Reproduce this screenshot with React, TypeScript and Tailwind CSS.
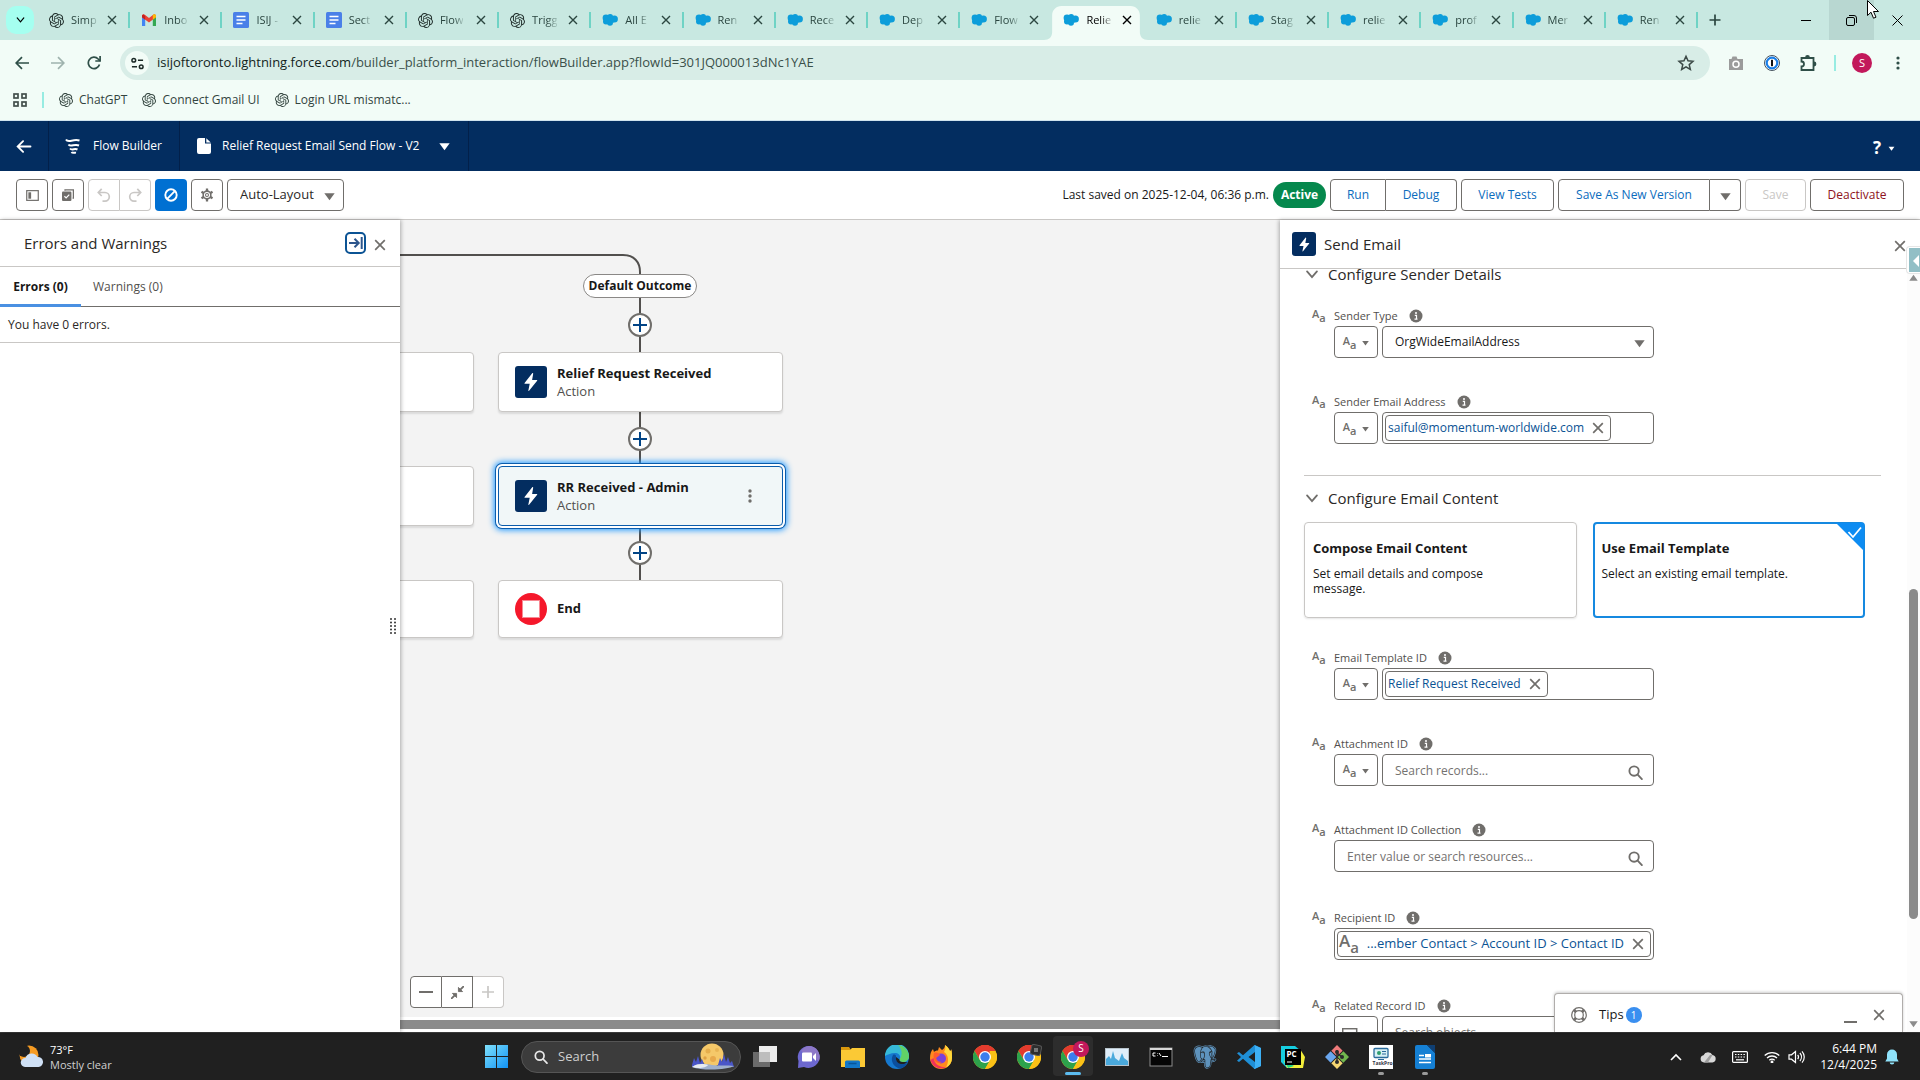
import React from "react";
import { SiOpenai } from "react-icons/si";
import { BiLogoPostgresql } from "react-icons/bi";

type P = { className?: string };

/* ---------- small drawings ---------- */

const CloudLogo = ({ className = "" }: P) => (
  <svg viewBox="0 0 16 14" className={className} fill="#0d9dda">
    <circle cx="4" cy="5" r="3.4" />
    <circle cx="8.2" cy="3.9" r="2.9" />
    <circle cx="12.4" cy="6" r="3.5" />
    <circle cx="4" cy="8.6" r="3" />
    <circle cx="8" cy="9.8" r="3" />
    <rect x="4" y="3.5" width="8" height="6" />
  </svg>
);

const GmailLogo = ({ className = "" }: P) => (
  <svg viewBox="0 0 16 14" className={className}>
    <path d="M1 13V3l3.2 2.4V13z" fill="#4285f4" />
    <path d="M11.8 13V5.4L15 3v10z" fill="#34a853" />
    <path d="M1 3a1.7 1.7 0 0 1 2.8-1.2L8 5l4.200-3.200A1.700 1.700 0 0 1 15 3v1.300L8 9.500 1 4.300z" fill="#ea4335" />
    <path d="M11.800 2.100A1.700 1.700 0 0 1 15 3v1.300l-3.200 2.400z" fill="#fbbc04" />
    <path d="M1 4.300V3c0-1 .7-1.500 1.500-1.500L4.200 3v3.700z" fill="#c5221f" />
  </svg>
);

const DocLogo = ({ className = "" }: P) => (
  <svg viewBox="0 0 16 16" className={className}>
    <rect width="16" height="16" rx="1.500" fill="#4a80e8" />
    <path d="M3.500 4.500h9M3.500 8h9M3.500 11.500h6" stroke="#fff" strokeWidth="1.700" />
  </svg>
);

const Cross = ({ className = "" }: P) => (
  <svg viewBox="0 0 10 10" className={className} stroke="currentColor" fill="none">
    <path d="M1 1l8 8M9 1l-8 8" strokeWidth="1.400" />
  </svg>
);

const Down = ({ className = "" }: P) => (
  <svg viewBox="0 0 10 8" className={className} fill="currentColor">
    <path d="M.3 1h9.400L5 7.500z" />
  </svg>
);

const Chevron = ({ className = "" }: P) => (
  <svg viewBox="0 0 14 10" className={className} fill="none" stroke="currentColor" strokeWidth="2" strokeLinecap="round">
    <path d="M1.500 1.500L7 8l5.500-6.500" />
  </svg>
);

const Bolt = ({ className = "" }: P) => (
  <svg viewBox="0 0 24 24" className={className} fill="#fff">
    <path d="M13.300 2.500L5 13.200c-.3.400 0 .8.400.8h5.200l-1.500 7.200c-.1.600.5.700.8.300L18.700 10.700c.3-.4 0-.8-.4-.8h-5.100l1.200-6.900c.1-.6-.700-1-1.100-.5z" />
  </svg>
);

const SearchIcon = ({ className = "" }: P) => (
  <svg viewBox="0 0 16 16" className={className} fill="none" stroke="currentColor" strokeWidth="2" strokeLinecap="round">
    <circle cx="6.500" cy="6.500" r="5" />
    <path d="M10.300 10.300L14.800 15" />
  </svg>
);

const Info = () => (
  <svg viewBox="0 0 14 14" className="size-[14px]">
    <circle cx="7" cy="7" r="6.500" fill="#706e6b" />
    <circle cx="7" cy="4" r="1" fill="#fff" />
    <path d="M5.800 6.300h1.700v3.700M5.500 10.200h3" stroke="#fff" strokeWidth="1.200" fill="none" />
  </svg>
);

/* the "text" data type mark */
const Aa = ({ big = false }: { big?: boolean }) => (
  <span aria-hidden className={big ? "flex text-[#706e6b] text-[17px] font-semibold leading-4" : "flex text-[#706e6b] text-[11px] font-semibold leading-3"}>
    A<span className={big ? "text-[15px] pt-1.5 leading-4" : "text-[11px] pt-1 leading-3"}>a</span>
  </span>
);

/* ---------- browser ---------- */

const tabs: [string, string][] = [
  ["ai", "Simp"], ["gmail", "Inbo"], ["doc", "ISIJ -"], ["doc", "Sect"], ["ai", "Flow"], ["ai", "Trigg"],
  ["sf", "All E"], ["sf", "Ren"], ["sf", "Rece"], ["sf", "Dep"], ["sf", "Flow"], ["sf", "Relie"],
  ["sf", "relie"], ["sf", "Stag"], ["sf", "relie"], ["sf", "prof"], ["sf", "Mer"], ["sf", "Ren"],
];

const TabIcon = ({ kind }: { kind: string }) =>
  kind === "ai" ? <SiOpenai className="size-[15px] shrink-0 text-[#22302d]" />
  : kind === "gmail" ? <GmailLogo className="h-[14px] w-4 shrink-0" />
  : kind === "doc" ? <DocLogo className="size-4 shrink-0" />
  : <CloudLogo className="h-[14px] w-4 shrink-0" />;

function TabStrip() {
  return (
    <div className="flex h-10 shrink-0 bg-[#c8e8e1] text-[#2b4640]">
      <div className="w-[38px] shrink-0 p-1.5">
        <button aria-label="Search tabs" className="flex size-7 items-center justify-center rounded-[10px] bg-[#a5fff0]">
          <Chevron className="h-[6px] w-[9px] text-black" />
        </button>
      </div>
      <div className="flex min-w-0 flex-1">
        {tabs.map(([kind, label], i) => {
          const active = i === 11;
          return (
            <div key={i} className={`relative flex min-w-0 flex-1 ${active ? "text-black" : ""}`}>
              {active && (
                <svg viewBox="0 0 102 34" className="absolute -left-2 top-1.5 h-[34px] w-[104px]" preserveAspectRatio="none" fill="#f2fcf7">
                  <path d="M0 34c5 0 8-3 8-8V9c0-5 4-9 9-9h68c5 0 9 4 9 9v17c0 5 3 8 8 8z" />
                </svg>
              )}
              <button className="relative flex min-w-0 flex-1 items-center pl-[11px]">
                <TabIcon kind={kind} />
                <span className="ml-[7px] whitespace-nowrap text-left text-[11px] [mask-image:linear-gradient(to_right,black_60%,#0003)]">{label}</span>
              </button>
              <button aria-label={`Close ${label}`} className="relative flex w-[21px] items-center"><Cross className="size-[10px]" /></button>
              <span className={`mt-3 h-4 w-0.5 ${active || i === 10 ? "" : "bg-[#6fd3c5]"}`} />
            </div>
          );
        })}
      </div>
      <div className="flex w-[222px] shrink-0 items-stretch">
        <button aria-label="New tab" className="flex w-[34px] items-center justify-center">
          <svg viewBox="0 0 12 12" className="size-3" stroke="currentColor" strokeWidth="1.700"><path d="M6 .5v11M.5 6h11" /></svg>
        </button>
        <div className="w-[51px]" />
        <button aria-label="Minimize" className="flex w-[46px] items-center justify-center"><span className="h-px w-2.5 bg-black" /></button>
        <button aria-label="Restore" className="flex w-[45px] items-center justify-center bg-[#b8d7d1]">
          <svg viewBox="0 0 11 11" className="size-[11px]" fill="none" stroke="#000"><rect x=".5" y="2.500" width="8" height="8" rx="1.500" /><path d="M3 .5h5a2.500 2.500 0 0 1 2.500 2.500v5" /></svg>
        </button>
        <button aria-label="Close" className="flex w-[46px] items-center justify-center text-black">
          <svg viewBox="0 0 11 11" className="size-[11px]" stroke="currentColor"><path d="M.5.5l10 10M10.500.5l-10 10" /></svg>
        </button>
      </div>
    </div>
  );
}

function AddressRow() {
  const ib = "flex w-9 items-center justify-center";
  return (
    <div className="flex h-[46px] shrink-0 items-center bg-[#f2fcf7] pl-1 text-[#2f4f48]">
      <button aria-label="Back" className={ib}>
        <svg viewBox="0 0 14 14" className="size-[14px]" fill="none" stroke="currentColor" strokeWidth="1.700"><path d="M14 7H1.500M7 1.200L1.200 7 7 12.800" /></svg>
      </button>
      <button aria-label="Forward" className="flex w-9 items-center justify-center text-[#9fb3ae]">
        <svg viewBox="0 0 14 14" className="size-[14px]" fill="none" stroke="currentColor" strokeWidth="1.700"><path d="M0 7h12.500M7 1.200L12.800 7 7 12.800" /></svg>
      </button>
      <button aria-label="Reload" className={ib}>
        <svg viewBox="0 0 14 14" className="size-[14px]" fill="none" stroke="currentColor" strokeWidth="1.700"><path d="M12.500 8.500A5.700 5.700 0 1 1 11.200 3L13 4.800" /><path d="M13.100 0v5H8.300" /></svg>
      </button>
      <div className="ml-2 flex h-[34px] flex-1 items-center rounded-full bg-[#d8ede7] pl-[5px] pr-[15px]">
        <button aria-label="Site information" className="flex size-6 shrink-0 items-center justify-center rounded-full bg-[#f2fcf7]">
          <svg viewBox="0 0 14 14" className="size-[13px]" fill="none" stroke="#1c2b28" strokeWidth="1.600"><circle cx="3" cy="3.500" r="2" /><path d="M7.500 3.500H13M1 10.500h5.500" /><circle cx="11" cy="10.500" r="2" /></svg>
        </button>
        <div className="ml-2 flex-1 whitespace-nowrap text-[13px] text-[#3a504a]" role="textbox" aria-label="Address">
          <span className="text-[#121f1c]">isijoftoronto.lightning.force.com</span>/builder_platform_interaction/flowBuilder.app?flowId=301JQ000013dNc1YAE
        </div>
        <button aria-label="Bookmark this page">
          <svg viewBox="0 0 24 24" className="size-[18px]" fill="none" stroke="#3c4a47" strokeWidth="2"><path d="M12 3l2.700 6.100 6.600.6-5 4.400 1.500 6.500L12 17.200l-5.800 3.400 1.500-6.500-5-4.400 6.600-.6z" /></svg>
        </button>
      </div>
      <div className="flex w-[210px] shrink-0 items-center pl-2">
        <button aria-label="Screenshot" className={ib}>
          <svg viewBox="0 0 16 16" className="size-4"><path d="M1 4h2.500l1-2.500h4L9.500 4H15v11H1z" fill="#9b9b9b" /><circle cx="8" cy="9.300" r="3" fill="none" stroke="#fff" strokeWidth="1.500" /></svg>
        </button>
        <button aria-label="Password manager" className={ib}>
          <svg viewBox="0 0 16 16" className="size-4"><circle cx="8" cy="8" r="7.500" fill="#fff" stroke="#44515c" /><circle cx="8" cy="8" r="5.300" fill="#fff" stroke="#1a7fe8" strokeWidth="2.200" /><rect x="7" y="4.800" width="2" height="6.400" fill="#111" /></svg>
        </button>
        <button aria-label="Extensions" className={ib}>
          <svg viewBox="0 0 18 18" className="size-[18px]" fill="none" stroke="currentColor" strokeWidth="1.800"><path d="M2.500 4h12v12h-12v-3.500a2.300 2.300 0 0 0 0-5z" /><path d="M7 3.500a1.500 1.500 0 0 1 3 0zM15 8.500a1.500 1.500 0 0 1 0 3z" fill="currentColor" /></svg>
        </button>
        <span className="ml-2 h-4 w-0.5 bg-[#97ece2]" />
        <button aria-label="Profile" className="ml-4 flex size-5 items-center justify-center rounded-full bg-[#c2185b] text-[11px] text-white">S</button>
        <button aria-label="Browser menu" className="ml-2 flex w-9 items-center justify-center">
          <svg viewBox="0 0 4 14" className="h-[14px] w-1" fill="currentColor"><circle cx="2" cy="2" r="1.600" /><circle cx="2" cy="7" r="1.600" /><circle cx="2" cy="12" r="1.600" /></svg>
        </button>
      </div>
    </div>
  );
}

function Bookmarks() {
  return (
    <nav className="flex h-[35px] shrink-0 items-center border-b border-[#cfe3ee] bg-[#f2fcf7] pb-[7px] pl-[13px] text-xs text-[#33443f]">
      <button aria-label="Apps"><svg viewBox="0 0 14 14" className="size-[14px]" fill="none" stroke="#444f4c" strokeWidth="1.700"><rect x="1" y="1" width="4" height="4" /><rect x="9" y="1" width="4" height="4" /><rect x="1" y="9" width="4" height="4" /><rect x="9" y="9" width="4" height="4" /></svg></button>
      <span className="ml-[15px] mr-[15px] h-4 w-0.5 bg-[#97ece2]" />
      {["ChatGPT", "Connect Gmail UI", "Login URL mismatc..."].map((t) => (
        <a key={t} href="#bookmark" className="mr-[15px] flex items-center gap-1.5 whitespace-nowrap"><SiOpenai className="size-[14px]" />{t}</a>
      ))}
    </nav>
  );
}

/* ---------- flow builder ---------- */

function AppHeader() {
  return (
    <header className="flex h-[50px] shrink-0 items-stretch bg-[#032d60] text-xs text-white">
      <button aria-label="Back" className="flex w-[49px] items-center justify-center border-r border-[#02204a]">
        <svg viewBox="0 0 16 14" className="h-[13px] w-4" fill="none" stroke="#fff" strokeWidth="2" strokeLinecap="round"><path d="M15 7H1.500M7 1.200L1.200 7 7 12.800" /></svg>
      </button>
      <div className="flex w-[131px] items-center gap-3 border-r border-[#02204a] pl-4">
        <svg viewBox="0 0 16 16" className="size-4" fill="none" stroke="#fff" strokeWidth="2"><path d="M1 1.500C3 5.500 8 .5 14.500 2.500M3.500 6.500c2 3 6-1 10.500 1M5 10.500c2 2.500 4.500-.5 7.500 1M6.500 14c1 1.500 2.500.3 4.500.8" /></svg>
        <span className="whitespace-nowrap">Flow Builder</span>
      </div>
      <button className="flex w-[289px] items-center border-r border-[#02204a] pl-[17px]">
        <svg viewBox="0 0 14 16" className="h-4 w-[14px]" fill="#fff"><path d="M2 0h6v5.500h6V14a2 2 0 0 1-2 2H2a2 2 0 0 1-2-2V2a2 2 0 0 1 2-2z" /><path d="M9.300.2L13.800 4.500H9.300z" /></svg>
        <span className="ml-[11px] whitespace-nowrap">Relief Request Email Send Flow - V2</span>
        <Down className="ml-auto mr-[18px] h-[9px] w-[11px]" />
      </button>
      <button className="ml-auto mr-[25px] flex items-center gap-[7px] pt-1 text-[17px] font-bold">?<Down className="h-[5px] w-[7px]" /></button>
    </header>
  );
}

const tb = "flex h-8 items-center justify-center border border-[#706e6b] bg-white text-[#706e6b]";
const act = "flex h-8 items-center justify-center border border-[#706e6b] bg-white text-[#0b6cbd]";

function Toolbar() {
  return (
    <div className="flex h-[49px] shrink-0 items-center gap-1 border-b border-[#c9c7c5] bg-white px-4 text-xs">
      <button aria-label="Toggle toolbox" className={tb + " w-8 rounded"}>
        <svg viewBox="0 0 14 12" className="h-[11px] w-[13px]" fill="none" stroke="currentColor" strokeWidth="1.300"><rect x=".7" y=".7" width="12.600" height="10.600" /><rect x="2.500" y="2.500" width="3" height="7" fill="currentColor" stroke="none" /></svg>
      </button>
      <button aria-label="Select elements" className={tb + " w-8 rounded"}>
        <svg viewBox="0 0 14 14" className="size-3"><path d="M3.500 2V1h9.800v9.700h-1" fill="none" stroke="currentColor" strokeWidth="1.500" /><rect x="0" y="3" width="11" height="11" rx="1.300" fill="currentColor" /><path d="M2.800 8.500l2 2 3.700-4" fill="none" stroke="#fff" strokeWidth="1.400" /></svg>
      </button>
      <div className="flex text-[#c9c7c5]">
        <button aria-label="Undo" disabled className="flex h-8 w-8 items-center justify-center rounded-l border border-[#c9c7c5]">
          <svg viewBox="0 0 14 14" className="size-[14px]" fill="none" stroke="currentColor" strokeWidth="1.700"><path d="M4.700.8L1.300 4.500l3.400 3.500M1.500 4.500H8a4.300 4.300 0 0 1 0 8.600H5.500" /></svg>
        </button>
        <button aria-label="Redo" disabled className="flex h-8 w-[31px] items-center justify-center rounded-r border border-l-0 border-[#c9c7c5]">
          <svg viewBox="0 0 14 14" className="size-[14px]" fill="none" stroke="currentColor" strokeWidth="1.700"><path d="M9.300.8l3.400 3.700L9.300 8M12.500 4.500H6a4.300 4.300 0 0 0 0 8.600h2.500" /></svg>
        </button>
      </div>
      <button aria-label="Show errors" className="flex size-8 items-center justify-center rounded bg-[#0070d2] text-white">
        <svg viewBox="0 0 14 14" className="size-[14px]" fill="none" stroke="currentColor" strokeWidth="1.900"><circle cx="7" cy="7" r="5.700" /><path d="M3.200 10.800l7.600-7.600" /></svg>
      </button>
      <button aria-label="Settings" className={tb + " w-8 rounded"}>
        <svg viewBox="0 0 16 16" className="size-[14px]" fill="none" stroke="currentColor"><circle cx="8" cy="8" r="4.400" strokeWidth="1.800" /><circle cx="8" cy="8" r="1.700" strokeWidth="1.200" /><path d="M8 .7v2.800M8 12.500v2.800M1.700 4.300l2.400 1.400M11.900 10.300l2.400 1.400M1.700 11.700l2.400-1.400M11.900 5.700l2.400-1.400" strokeWidth="2.600" /></svg>
      </button>
      <div className="relative">
        <select aria-label="Layout mode" className="h-8 w-[117px] appearance-none rounded border border-[#706e6b] bg-white pl-3 text-[13px] text-[#2b2826]"><option>Auto-Layout</option></select>
        <Down className="pointer-events-none absolute right-[9px] top-[13px] h-[9px] w-[11px] text-[#706e6b]" />
      </div>
      <span className="ml-auto whitespace-nowrap text-[#181818]">Last saved on 2025-12-04, 06:36 p.m.</span>
      <span className="flex h-[26px] w-[53px] items-center justify-center rounded-full bg-[#05884d] font-bold text-white">Active</span>
      <div className="flex">
        <button className={act + " w-14 rounded-l"}>Run</button>
        <button className={act + " w-[71px] rounded-r border-l-0"}>Debug</button>
      </div>
      <button className={act + " w-[93px] rounded"}>View Tests</button>
      <div className="flex">
        <button className={act + " w-[152px] rounded-l"}>Save As New Version</button>
        <button aria-label="More save options" className={tb + " w-[31px] rounded-r border-l-0"}><Down className="mt-0.5 h-[9px] w-[11px]" /></button>
      </div>
      <button disabled className="h-8 w-[61px] rounded border border-[#c9c7c5] text-[#c9c7c5]">Save</button>
      <button className="h-8 w-[94px] rounded border border-[#706e6b] text-[#8e1320]">Deactivate</button>
    </div>
  );
}

function ErrorsPanel() {
  return (
    <aside className="relative z-10 flex w-[400px] shrink-0 flex-col bg-white shadow-[1px_0_4px_rgba(0,0,0,0.3)]">
      <div className="flex h-[47px] items-center border-b border-[#c9c7c5] pl-6 pr-[14px]">
        <h2 className="text-[15px] text-[#2b2826]">Errors and Warnings</h2>
        <button aria-label="Dock panel" className="ml-auto flex h-[22px] w-[21px] items-center justify-center rounded-[5px] border-2 border-[#0b5394] text-[#2d568c]">
          <svg viewBox="0 0 14 12" className="h-3 w-[14px] shrink-0" fill="none" stroke="currentColor" strokeWidth="2"><path d="M0 6h9M5.500 1.800L9.700 6l-4.200 4.200M12.700 0v12" /></svg>
        </button>
        <button aria-label="Close panel" className="ml-2 mt-1 text-[#706e6b]"><Cross className="size-3" /></button>
      </div>
      <div role="tablist" className="flex h-10 border-b border-[#706e6b] text-xs">
        <button role="tab" className="-mb-px w-[81px] border-b-[3px] border-[#4a90e2] pt-0.5 font-bold text-[#181818]">Errors (0)</button>
        <button role="tab" className="px-3 text-[#514f4d]">Warnings (0)</button>
      </div>
      <p className="flex h-9 items-center border-b border-[#c9c7c5] pl-2 pt-px text-xs text-[#2b2826]">You have 0 errors.</p>
      <svg viewBox="0 0 6 16" className="absolute right-1 top-[398px] h-4 w-[6px]" fill="#333">
        {[1, 4.500, 8, 11.500, 15].map((y) => <g key={y}><circle cx="1" cy={y} r="1" /><circle cx="5" cy={y} r="1" /></g>)}
      </svg>
    </aside>
  );
}

const AddDot = ({ className = "" }: P) => (
  <button aria-label="Add element" className={"absolute left-[228px] flex size-6 items-center justify-center rounded-full border-2 border-[#706e6b] bg-white " + className}>
    <svg viewBox="0 0 14 14" className="size-[14px] shrink-0" stroke="#014486" strokeWidth="2"><path d="M7 0v14M0 7h14" /></svg>
  </button>
);

const nodeBox = "absolute left-[98px] flex w-[285px] items-center rounded border pl-4 text-left";
const ghost = "absolute -left-[211px] w-[285px] rounded border border-[#c9c7c5] bg-white shadow-[0_2px_2px_rgba(0,0,0,0.1)]";

function ActionBody({ title }: { title: string }) {
  return (
    <>
      <span className="flex size-8 shrink-0 items-center justify-center rounded-[3px] bg-[#032d60]"><Bolt className="size-[22px]" /></span>
      <span className="ml-[10px] flex flex-col">
        <span className="text-[13px] font-bold leading-[18px] text-[#181818]">{title}</span>
        <span className="text-[13px] leading-[18px] text-[#514f4d]">Action</span>
      </span>
    </>
  );
}

function Canvas() {
  return (
    <main className="flex min-w-0 flex-1 flex-col bg-white">
      <div className="relative flex-1 overflow-hidden bg-[#f3f3f3]">
        <svg className="absolute left-0 top-0 h-[400px] w-[300px]" fill="none" stroke="#514f4d" strokeWidth="2"><path d="M0 35h223c11 0 17 7 17 17v308" /></svg>
        <span className="absolute left-[183px] top-[54px] flex h-6 w-[114px] items-center justify-center whitespace-nowrap rounded-full border border-[#8a8886] bg-white text-xs font-bold text-[#181818]">Default Outcome</span>
        <AddDot className="top-[93px]" />
        <AddDot className="top-[207px]" />
        <AddDot className="top-[321px]" />
        <div className={ghost + " top-[132px] h-[60px]"} />
        <div className={ghost + " top-[246px] h-[60px]"} />
        <div className={ghost + " top-[360px] h-[58px]"} />
        <button className={nodeBox + " top-[132px] h-[60px] border-[#c9c7c5] bg-white shadow-[0_2px_2px_rgba(0,0,0,0.1)]"}><ActionBody title="Relief Request Received" /></button>
        <div className={nodeBox + " top-[246px] h-[60px] border-[#0b5cab] bg-[#f1f7f8] shadow-[0_0_0_2px_#fff,0_0_0_3px_#0b5cab,0_0_6px_4px_#1b96ff]"}>
          <ActionBody title="RR Received - Admin" />
          <button aria-label="Element menu" className="ml-auto mr-[30px]">
            <svg viewBox="0 0 4 14" className="h-[14px] w-1" fill="#706e6b"><circle cx="2" cy="2" r="1.700" /><circle cx="2" cy="7" r="1.700" /><circle cx="2" cy="12" r="1.700" /></svg>
          </button>
        </div>
        <button className={nodeBox + " top-[360px] h-[58px] border-[#c9c7c5] bg-white shadow-[0_2px_2px_rgba(0,0,0,0.1)]"}>
          <svg viewBox="0 0 32 32" className="size-8"><circle cx="16" cy="16" r="16" fill="#f5182b" /><rect x="7.500" y="7.500" width="17" height="17" fill="#fff" stroke="#f78a94" /></svg>
          <span className="ml-[10px] text-[13px] font-bold text-[#181818]">End</span>
        </button>
        <div className="absolute bottom-[9px] left-[10px] flex">
          <button aria-label="Zoom out" className={tb + " w-8 rounded-l"}><span className="h-0.5 w-[14px] bg-[#706e6b]" /></button>
          <button aria-label="Zoom to fit" className={tb + " w-[31px] border-l-0"}>
            <svg viewBox="0 0 14 14" className="size-[13px]" fill="currentColor" stroke="currentColor"><path d="M14 0L9.500 4.500M0 14l4.500-4.500" strokeWidth="2" /><path d="M8 1.500V6h4.500zM6 12.500V8H1.500z" /></svg>
          </button>
          <button aria-label="Zoom in" disabled className="flex h-8 w-[31px] items-center justify-center rounded-r border border-l-0 border-[#c9c7c5] bg-white">
            <svg viewBox="0 0 12 12" className="size-3" stroke="#c9c7c5" strokeWidth="1.700"><path d="M6 0v12M0 6h12" /></svg>
          </button>
        </div>
      </div>
      <div className="h-[15px] shrink-0 py-[3px]"><div className="h-[9px] bg-[#8b8b8b]" /></div>
    </main>
  );
}

function Label({ id, text }: { id: string; text: string }) {
  return (
    <div className="flex h-5 items-center pl-2">
      <span className="w-[22px]"><Aa /></span>
      <label htmlFor={id} className="mr-[11px] whitespace-nowrap text-[11px] text-[#514f4d]">{text}</label>
      <Info />
    </div>
  );
}

const TypeButton = () => (
  <button aria-label="Data type" className={tb + " w-11 shrink-0 gap-1.5 rounded pt-0.5"}>
    <Aa /><Down className="h-[6px] w-[7px]" />
  </button>
);

const fieldBox = "relative flex h-8 flex-1 items-center rounded border border-[#706e6b] bg-white";

function Chip({ text, big = false, id }: { text: string; big?: boolean; id: string }) {
  return (
    <div className={fieldBox + " px-0.5"}>
      <span className={"flex h-[26px] items-center whitespace-nowrap rounded border border-[#706e6b] text-[#0b5394] " + (big ? "w-full pl-px pr-1 text-[13px]" : "pl-0.5 pr-1 text-xs")}>
        {big && <Aa big />}
        <span className={big ? "ml-auto" : ""}>{text}</span>
        <button aria-label={`Remove ${text}`} className="ml-2 mr-0.5 text-[#706e6b]"><Cross className="size-3" /></button>
      </span>
      {!big && <input id={id} className="w-4 min-w-0 flex-1 outline-none" />}
      {big && <input id={id} type="hidden" />}
    </div>
  );
}

function SearchField({ id, placeholder }: { id: string; placeholder: string }) {
  return (
    <div className={fieldBox}>
      <input id={id} placeholder={placeholder} className="h-full w-full rounded bg-transparent pl-3 text-xs outline-none placeholder:text-[#747270]" />
      <SearchIcon className="absolute right-[10px] top-[10px] size-[15px] text-[#706e6b]" />
    </div>
  );
}

const fieldRow = "ml-[30px] flex w-[320px] gap-1";

function SendEmailPanel() {
  return (
    <aside className="relative z-10 flex w-[640px] shrink-0 flex-col bg-white shadow-[-1px_0_4px_rgba(0,0,0,0.3)]">
      <div className="flex h-[49px] shrink-0 items-center border-b border-[#c9c7c5] pl-3 pr-[14px]">
        <span className="flex size-6 items-center justify-center rounded-[3px] bg-[#032d60]"><Bolt className="size-[17px]" /></span>
        <h2 className="ml-2 text-[15px] text-[#2b2826]">Send Email</h2>
        <button aria-label="Close panel" className="ml-auto mt-1 text-[#706e6b]"><Cross className="size-3" /></button>
      </div>
      <div className="flex min-h-0 flex-1">
        <div className="min-w-0 flex-1 overflow-hidden pl-6">
          <button className="-mt-[7px] flex h-6 items-center gap-[9px] pl-px text-[15px] text-[#2b2826]"><Chevron className="h-[9px] w-[14px] text-[#706e6b]" />Configure Sender Details</button>
          <div className="mt-5"><Label id="st" text="Sender Type" />
            <div className={fieldRow}><TypeButton />
              <div className="relative flex-1">
                <select id="st" className="h-8 w-full appearance-none rounded border border-[#706e6b] bg-white pl-3 text-xs text-[#181818]"><option>OrgWideEmailAddress</option></select>
                <Down className="pointer-events-none absolute right-[9px] top-[13px] h-[9px] w-[11px] text-[#706e6b]" />
              </div>
            </div>
          </div>
          <div className="mt-[34px]"><Label id="se" text="Sender Email Address" />
            <div className={fieldRow}><TypeButton /><Chip id="se" text="saiful@momentum-worldwide.com" /></div>
          </div>
          <hr className="mr-[26px] mt-[31px] border-[#c9c7c5]" />
          <button className="mt-[10px] flex h-6 items-center gap-[9px] pl-px text-[15px] text-[#2b2826]"><Chevron className="h-[9px] w-[14px] text-[#706e6b]" />Configure Email Content</button>
          <div className="mr-[42px] mt-3 grid grid-cols-2 gap-4 text-[#181818]">
            <button className="flex h-24 flex-col rounded border border-[#c9c7c5] px-2 pt-4 text-left shadow-[0_1px_2px_rgba(0,0,0,0.1)]">
              <b className="text-[13px] leading-[18px]">Compose Email Content</b>
              <span className="mt-[9px] w-[200px] text-xs leading-[15px]">Set email details and compose message.</span>
            </button>
            <button className="relative flex h-24 flex-col rounded border-2 border-[#1589e0] px-[7px] pt-[15px] text-left">
              <b className="text-[13px] leading-[18px]">Use Email Template</b>
              <span className="mt-[9px] text-xs leading-[15px]">Select an existing email template.</span>
              <svg viewBox="0 0 28 28" className="absolute -right-px -top-px size-7"><path d="M0 0h28v28z" fill="#0d8cf2" /><path d="M12.500 9l4.500 5L25 4.500" fill="none" stroke="#fff" strokeWidth="1.800" /></svg>
            </button>
          </div>
          <div className="mt-[30px]"><Label id="et" text="Email Template ID" />
            <div className={fieldRow}><TypeButton /><Chip id="et" text="Relief Request Received" /></div>
          </div>
          <div className="mt-[34px]"><Label id="ai" text="Attachment ID" />
            <div className={fieldRow}><TypeButton /><SearchField id="ai" placeholder="Search records..." /></div>
          </div>
          <div className="mt-[34px]"><Label id="ac" text="Attachment ID Collection" />
            <div className={fieldRow}><SearchField id="ac" placeholder="Enter value or search resources..." /></div>
          </div>
          <div className="mt-9"><Label id="ri" text="Recipient ID" />
            <div className={fieldRow}><Chip id="ri" big text="...ember Contact > Account ID > Contact ID" /></div>
          </div>
          <div className="mt-9"><Label id="rr" text="Related Record ID" />
            <div className={fieldRow}>
              <button aria-label="Object type" className={tb + " w-11 shrink-0 rounded"}>
                <svg viewBox="0 0 16 12" className="-ml-3 mt-1 h-3 w-4" fill="none" stroke="currentColor" strokeWidth="1.500"><rect x=".7" y=".7" width="14" height="10" /></svg>
              </button>
              <SearchField id="rr" placeholder="Search objects..." />
            </div>
          </div>
        </div>
        <div className="flex w-[13px] shrink-0 flex-col items-center bg-[#fcfcfc] pb-1 pr-px pt-[5px]">
          <Down className="h-2 w-[9px] rotate-180 text-[#8b8b8b]" />
          <div className="mt-[307px] h-[330px] w-[9px] rounded-full bg-[#8b8b8b]" />
          <Down className="mt-auto h-2 w-[9px] text-[#8b8b8b]" />
        </div>
      </div>
      <button aria-label="Open side widget" className="absolute right-0 top-[26px] flex h-[28px] w-[14px] items-center justify-end rounded-l border border-r-0 border-[#e6e6e6] bg-white pl-0.5">
        <svg viewBox="0 0 11 24" className="h-6 w-[11px]"><rect width="11" height="24" fill="#92bfc6" /><path d="M10 7v12L4 13z" fill="#fff" /></svg>
      </button>
      <div className="absolute bottom-0 right-[17px] flex h-[39px] w-[349px] items-center rounded-t border border-b-0 border-[#b0adab] bg-white pl-4 pr-[17px] pt-1 text-[13px] text-[#181818] shadow-[0_-1px_3px_rgba(0,0,0,0.2)]">
        <svg viewBox="0 0 16 16" className="size-4" fill="none" stroke="#706e6b"><circle cx="8" cy="8" r="7.300" strokeWidth="1.200" /><circle cx="8" cy="8" r="4.300" strokeWidth="1.200" /><g strokeWidth="3"><path d="M2.800 2.800L5 5M13.200 2.800L11 5M2.800 13.200L5 11M13.200 13.200L11 11" /></g></svg>
        <span className="ml-3">Tips</span>
        <span className="ml-0.5 flex size-4 items-center justify-center rounded-full bg-[#3a8ff0] text-[10px] text-white">1</span>
        <button aria-label="Minimize tips" className="ml-auto flex h-4 items-end"><span className="h-0.5 w-[13px] bg-[#706e6b]" /></button>
        <button aria-label="Close tips" className="ml-4 text-[#706e6b]"><Cross className="size-3" /></button>
      </div>
    </aside>
  );
}

/* ---------- taskbar ---------- */

const ChromeLogo = () => (
  <svg viewBox="0 0 24 24" className="size-6">
    <circle cx="12" cy="12" r="12" fill="#fbc116" />
    <path d="M12 12L1.600 6A12 12 0 0 1 22.400 6z" fill="#e33b2e" />
    <path d="M12 6h10.400A12 12 0 0 0 1.600 6L6.800 15z" fill="#e33b2e" />
    <path d="M1.600 6A12 12 0 0 0 12 24l5.200-9L12 12 6.800 15z" fill="#2da24c" />
    <path d="M12 24l5.200-9A6 6 0 0 0 17.200 9L16.500 6h5.900A12 12 0 0 1 12 24z" fill="#fbc116" />
    <circle cx="12" cy="12" r="6" fill="#fff" /><circle cx="12" cy="12" r="4.700" fill="#3b7ded" />
  </svg>
);

const S = ({ children }: { children: React.ReactNode }) => <svg viewBox="0 0 24 24" className="size-6">{children}</svg>;

const apps: [string, React.ReactNode][] = [
  ["Task view", <S key="a"><rect y="7" width="17" height="15" fill="#6b6b6b" /><rect x="6" y="1" width="18" height="16" fill="#ededed" /><rect x="6" y="7" width="11" height="10" fill="#bdbdbd" /></S>],
  ["Chat", <S key="b"><path d="M12 1a11 11 0 1 1-5 21l-6 1 .5-7A11 11 0 0 1 12 1z" fill="#6d68d0" /><path d="M12 1a11 11 0 0 1 10 15L4 6a11 11 0 0 1 8-5z" fill="#8d78c8" /><rect x="5" y="7.500" width="10" height="9" rx="1" fill="#fff" /><path d="M16 11l3-3v8l-3-3z" fill="#fff" /></S>],
  ["Files", <S key="c"><path d="M0 2h8l2 3H0z" fill="#d9980d" /><path d="M0 5h9l2-2h13v19H0z" fill="#fbc935" /><path d="M4 23v-6a1.500 1.500 0 0 1 1.500-1.500h12A1.500 1.500 0 0 1 19 17v6z" fill="#1277c8" /><path d="M7.500 18.500h8" stroke="#07559a" strokeWidth="1.500" /></S>],
  ["Edge", <S key="d"><circle cx="12" cy="12" r="12" fill="#1679cf" /><path d="M0 11A12 12 0 0 1 24 11c0 4-3 6-6.500 6-2 0-3.500-1-3-2.500 2-3-.5-6.500-4.500-6.500-4.500 0-8 2-10 3z" fill="#36b9d8" /><path d="M13 .1A12 12 0 0 1 24 11c0 4-3 6-6.500 6-2 0-3.500-1-3-2.500C18 10 17 4 13 .1z" fill="#62d266" /><path d="M8 10c-3 5 0 12 7 13.500 4-.5 6-3 8-5.500-7 3-13-.5-12-6 .5-2-1.500-3-3-2z" fill="#0b4e9c" /><path d="M11 12c-.5 4 1.500 6.500 5 7 3 .4 5-.5 6.500-1.500-1.500-.5-3-.5-5-.5-2 0-3.500-1-3-2.500z" fill="#202020" /></S>],
  ["Firefox", <S key="e"><path d="M1 13c0-4 1-7 3-9l1 3c1-1 2-1.500 4-1.500L10 2l3 3c2-1 3-3 3-5 3 2 4 4 5 6 1 0 1-1 1-2 1 3 1 5 1 9a11 11 0 0 1-22 0z" fill="#ff8a1e" /><path d="M16 0c3 2 4 4 5 6 1 0 1-1 1-2 1 3 1 5 1 9a11 11 0 0 1-6 9.500C20 17 20 10 15 7c1-2 2-4 1-7z" fill="#ffd93a" /><path d="M1.500 15a11 11 0 0 0 16 7c-3 1-12-1-13-9z" fill="#f0325a" /><circle cx="12" cy="13.500" r="5" fill="#7b42d8" /><path d="M5 8c3-1 5 0 6 2l-4 3c1 3 3 4 6 4-5 3-10-2-8-9z" fill="#ff5d2e" /></S>],
  ["Chrome", <ChromeLogo key="f" />],
  ["Chrome profile", <span key="g" className="relative"><ChromeLogo /><svg viewBox="0 0 12 12" className="absolute -right-px -top-px size-3"><rect x="1" y="1" width="10" height="10" rx="2" fill="#2d2d2d" stroke="#555" transform="rotate(12 6 6)" /><rect x="4" y="4" width="4" height="4" fill="#777" /></svg></span>],
  ["Chrome work", <span key="h" className="relative"><ChromeLogo /><span className="absolute -right-1 -top-1 flex size-4 items-center justify-center rounded-full bg-[#c2185b] text-[10px] text-white">S</span></span>],
  ["Monitor", <S key="i"><rect x=".5" y="3.500" width="23" height="17" fill="#dfeefa" stroke="#b8c4cc" /><path d="M1 20v-6l3-3 2 3 2-8 2 7 4 3 3-8 2 5 4 3v4z" fill="#4aa9dc" /></S>],
  ["Terminal", <S key="j"><rect x="1" y="3" width="22" height="18" fill="#050505" stroke="#8c8c8c" /><path d="M1 4h22" stroke="#d6d6d6" strokeWidth="2" /><path d="M6.500 8H4v3h2.500M8.500 8v.5M8.500 10.500v.5M10 8l2 3M13 11.500h6" stroke="#fff" fill="none" /></S>],
  ["PostgreSQL", <span key="k" className="flex size-6 items-center justify-center"><BiLogoPostgresql className="size-7 shrink-0 text-[#5e93bd]" /></span>],
  ["VS Code", <S key="l"><path d="M17.500 0L24 3v18l-6.500 3L6 13.800 2 17l-2-1.200L4 12 0 8.200 2 7l4 3.200zM18 7l-6.500 5 6.500 5z" fill="#1f8fd6" /><path d="M17.500 0L24 3v18l-6.500 3-.5-1 1-1V2z" fill="#3db0f5" /></S>],
  ["PyCharm", <S key="m"><path d="M0 1h14l6 5v13L6 23 0 17z" fill="#16cde0" /><path d="M6 23l-3-7 16-12 5 8-2 11z" fill="#f3ee3a" /><path d="M3 15l4 8 6-2z" fill="#21d789" /><rect x="4" y="4" width="16" height="16" fill="#000" /><text x="5.500" y="12" fontSize="8" fontWeight="bold" fill="#fff">PC</text><path d="M6 17h5" stroke="#fff" /></S>],
  ["Git", <S key="n"><g transform="rotate(45 12 12)"><rect x="3.500" y="3.500" width="8" height="8" fill="#ef7b7b" /><rect x="12.500" y="3.500" width="8" height="8" fill="#72b84e" /><rect x="3.500" y="12.500" width="8" height="8" fill="#6aa6ee" /><rect x="12.500" y="12.500" width="8" height="8" fill="#f5d773" /></g><path d="M12 5v13M12 8l5 4" stroke="#2b2b2b" strokeWidth="1.500" /><circle cx="12" cy="7" r="2" fill="#2b2b2b" /><circle cx="12" cy="17" r="2" fill="#2b2b2b" /><circle cx="17" cy="12" r="2" fill="#2b2b2b" /></S>],
  ["TaskPro", <S key="o"><rect width="24" height="24" fill="#fff" /><rect x="5" y="3.500" width="14" height="9" rx="1" fill="#d8f0f5" stroke="#2a6b9c" strokeWidth="1.300" /><circle cx="10" cy="8" r="2" fill="#2f9e6e" /><path d="M13 6.500h4M13 9h4M9 14.500h6" stroke="#2a6b9c" strokeWidth="1.200" /><text x="3.500" y="19.500" fontSize="5" fontWeight="bold" fill="#334">TaskPro</text></S>],
  ["Writer", <S key="p"><path d="M2 2a2 2 0 0 1 2-2h10l8 8v14a2 2 0 0 1-2 2H4a2 2 0 0 1-2-2z" fill="#1580d4" /><path d="M14 0h8v8z" fill="#0f3f73" /><path d="M6 10.500h5M6 14h12M6 17.500h12" stroke="#fff" strokeWidth="1.500" /><rect x="12" y="9" width="6" height="3.500" fill="#fff" /></S>],
];

function Taskbar() {
  return (
    <footer className="flex h-12 shrink-0 items-center border-t border-[#3a3a3a] bg-[#202020] text-white">
      <div className="flex w-[474px] shrink-0 items-center pl-[17px]">
        <svg viewBox="0 0 26 24" className="h-6 w-[26px]"><circle cx="12" cy="10" r="9.500" fill="#f59b23" /><circle cx="7" cy="6" r="6" fill="#202020" /><path d="M8 22a4.500 4.500 0 0 1 .5-9 6.500 6.500 0 0 1 12-1 5 5 0 0 1 1 10z" fill="#cfe0f5" /></svg>
        <div className="ml-[7px] text-[11px] leading-[15px]"><div>73°F</div><div className="text-[#d0d0d0]">Mostly clear</div></div>
      </div>
      <button aria-label="Start" className="flex w-[44px] justify-center">
        <svg viewBox="0 0 23 23" className="size-[23px]"><defs><linearGradient id="win" x1="0" y1="0" x2="1" y2="1"><stop stopColor="#7fe0fb" /><stop offset="1" stopColor="#1193f5" /></linearGradient></defs><path d="M0 0h11v11H0zM12 0h11v11H12zM0 12h11v11H0zM12 12h11v11H12z" fill="url(#win)" /></svg>
      </button>
      <label className="ml-[3px] flex h-8 w-[220px] shrink-0 items-center rounded-full border border-[#555] bg-[#3c3c3c] pl-3 pr-[5px]">
        <SearchIcon className="size-[14px] shrink-0 text-[#e8e8e8]" />
        <input aria-label="Search" placeholder="Search" className="ml-[10px] w-[100px] bg-transparent text-[13px] outline-none placeholder:text-[#cfcfcf]" />
        <svg viewBox="0 0 44 27" className="ml-auto h-[27px] w-11">
          <circle cx="21" cy="12" r="11.500" fill="#f5c869" /><circle cx="17" cy="8" r="2.500" fill="#e5ae4d" /><circle cx="26" cy="7" r="2" fill="#e9b555" /><circle cx="22" cy="16" r="3" fill="#e8a94b" /><circle cx="14" cy="15" r="1.700" fill="#dfa144" />
          <path d="M1 22l2-7 2 4 2-6 2 7 2-4 3 8H1zM27 22l2-7 2 4 2-8 2 8 2-5 2 6 2-2 2 6H27z" fill="#4a56c8" />
          <path d="M1 24c8-5 14-3 20-2 8 1 15 0 22 1-6 4-32 5-42 1z" fill="#9fb0cc" /><path d="M1 24c6-4 12-3 16-2-2 3-10 4-16 2z" fill="#e8ecf2" />
        </svg>
      </label>
      <div className="ml-0.5 flex h-full">
        {apps.map(([name, icon], i) => (
          <button key={name} aria-label={name} className="relative flex w-11 items-center justify-center">
            {i === 7 && <span className="absolute inset-x-0.5 top-[3px] h-10 rounded bg-[#2d2d2d]" />}
            {icon}
            {i === 7 && <span className="absolute bottom-[5px] h-[3px] w-4 rounded-full bg-[#5cbcf0]" />}
            {i > 13 && <span className="absolute bottom-[5px] h-[3px] w-1.5 rounded-full bg-[#9a9a9a]" />}
          </button>
        ))}
      </div>
      <div className="ml-auto flex items-center pr-[21px]">
        <div className="flex [&>button]:flex [&>button]:w-8 [&>button]:items-center [&>button]:justify-center">
          <button aria-label="Hidden icons"><svg viewBox="0 0 12 8" className="h-2 w-3" fill="none" stroke="#fff" strokeWidth="1.600"><path d="M1 7l5-5 5 5" /></svg></button>
          <button aria-label="Cloud sync"><svg viewBox="0 0 16 12" className="h-3 w-4"><path d="M4 11.500a3.700 3.700 0 0 1-.5-7.300A5 5 0 0 1 12.500 4a3.800 3.800 0 0 1 0 7.500z" fill="#d8d8d8" /><path d="M4 11.500L10 4a5 5 0 0 1 2.500 0L8 11.500z" fill="#9d9d9d" /></svg></button>
          <button aria-label="Keyboard"><svg viewBox="0 0 16 12" className="h-3 w-4" fill="none" stroke="#fff" strokeWidth="1.200"><rect x=".6" y=".6" width="14.800" height="10.800" rx="1" /><path d="M3 3.500h10M3 6h10" strokeDasharray="1.500 1.300" /><path d="M4 8.800h8" /></svg></button>
          <button aria-label="Network"><svg viewBox="0 0 16 12" className="h-3 w-4" fill="none" stroke="#fff" strokeWidth="1.300"><path d="M.7 4.500a10.500 10.500 0 0 1 14.600 0M3 7a7.200 7.200 0 0 1 10 0M5.300 9.300a4 4 0 0 1 5.400 0" /><circle cx="8" cy="11" r=".8" fill="#fff" /></svg></button>
        </div>
        <button aria-label="Volume"><svg viewBox="0 0 17 14" className="h-[14px] w-[17px]" fill="none" stroke="#fff" strokeWidth="1.200"><path d="M1 4.800h2.500L7.500 1.500v11l-4-3.300H1z" /><path d="M9.700 4.800c1 1.300 1 3.100 0 4.400M11.900 3c2 2.300 2 5.700 0 8M14 1.300c3 3.300 3 8.100 0 11.400" /></svg></button>
        <div className="ml-2 w-[64px] whitespace-nowrap text-right text-xs leading-4"><div>6:44 PM</div><div>12/4/2025</div></div>
        <button aria-label="Notifications" className="ml-2"><svg viewBox="0 0 14 16" className="h-4 w-[14px]" fill="#8fe3fb"><path d="M7 .5a5 5 0 0 1 5 5v4l1.700 3H.3l1.700-3v-4a5 5 0 0 1 5-5zM4.700 13.500h4.600a2.300 2 0 0 1-4.600 0z" /></svg></button>
      </div>
    </footer>
  );
}

export default function App() {
  return (
    <div className="relative flex h-screen flex-col overflow-hidden bg-white font-['Open_Sans',sans-serif] leading-normal">
      <TabStrip />
      <AddressRow />
      <Bookmarks />
      <AppHeader />
      <Toolbar />
      <div className="flex min-h-0 flex-1">
        <ErrorsPanel />
        <Canvas />
        <SendEmailPanel />
      </div>
      <Taskbar />
      <svg viewBox="0 0 12 19" className="pointer-events-none absolute right-[41px] top-0 h-[19px] w-3"><path d="M.5.5v15l3.500-3.300 2.500 6 2.500-1-2.500-5.700h5z" fill="#fff" stroke="#000" /></svg>
    </div>
  );
}
